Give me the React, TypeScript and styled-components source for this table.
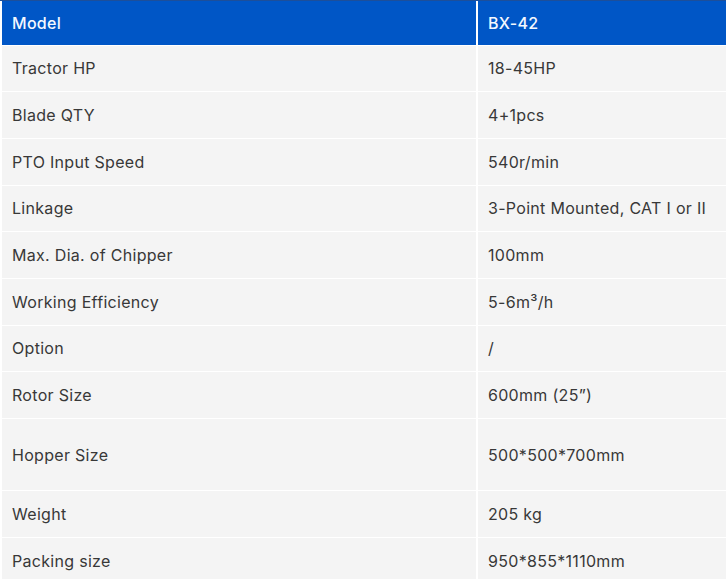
import React from "react";
import styled, { createGlobalStyle } from "styled-components";

const specs: { label: string; value: React.ReactNode; tall?: boolean }[] = [
  { label: "Tractor HP", value: "18-45HP" },
  { label: "Blade QTY", value: "4+1pcs" },
  { label: "PTO Input Speed", value: "540r/min" },
  { label: "Linkage", value: "3-Point Mounted, CAT I or II" },
  { label: "Max. Dia. of Chipper", value: "100mm" },
  { label: "Working Efficiency", value: "5-6m³/h" },
  { label: "Option", value: "/" },
  { label: "Rotor Size", value: "600mm (25”)" },
  { label: "Hopper Size", value: "500*500*700mm", tall: true },
  { label: "Weight", value: "205 kg" },
  { label: "Packing size", value: "950*855*1110mm" },
];

export default function App() {
  return (
    <>
      <GlobalStyle />
      <Page>
        <SpecTable>
          <thead>
            <tr>
              <HeadCell style={{ width: 475 }}>Model</HeadCell>
              <HeadCell>BX-42</HeadCell>
            </tr>
          </thead>
          <tbody>
            {specs.map((s) => (
              <Row key={s.label} $tall={s.tall}>
                <Cell>{s.label}</Cell>
                <Cell>{s.value}</Cell>
              </Row>
            ))}
          </tbody>
        </SpecTable>
      </Page>
    </>
  );
}

const GlobalStyle = createGlobalStyle`
  html, body {
    margin: 0;
    padding: 0;
    background: #ffffff;
    overflow: hidden;
  }
  body {
    font-family: Inter, "Noto Sans", sans-serif;
  }
`;

const Page = styled.div`
  width: 726px;
  height: 579px;
  padding: 0 0 0 2px;
  box-sizing: border-box;
  overflow: hidden;
  border-top: 1px solid #1d4f9a;
`;

const SpecTable = styled.table`
  width: 740px;
  border-collapse: collapse;
  table-layout: fixed;
`;

const HeadCell = styled.th`
  background: #0056c6;
  color: #f4f8ff;
  font-size: 16px;
  font-weight: 500;
  letter-spacing: 0.3px;
  text-align: left;
  height: 44px;
  padding: 0 10px;
  border-right: 2px solid #ffffff;
  box-sizing: border-box;
  vertical-align: middle;
`;

const Row = styled.tr<{ $tall?: boolean }>`
  height: ${(p) => (p.$tall ? "72px" : "46.7px")};
`;

const Cell = styled.td`
  background: #f4f4f4;
  color: #383838;
  font-size: 16px;
  font-weight: 400;
  letter-spacing: 0.3px;
  padding: 0 10px;
  border-top: 1.5px solid #ffffff;
  border-right: 2px solid #ffffff;
  box-sizing: border-box;
  vertical-align: middle;
  white-space: nowrap;
`;
